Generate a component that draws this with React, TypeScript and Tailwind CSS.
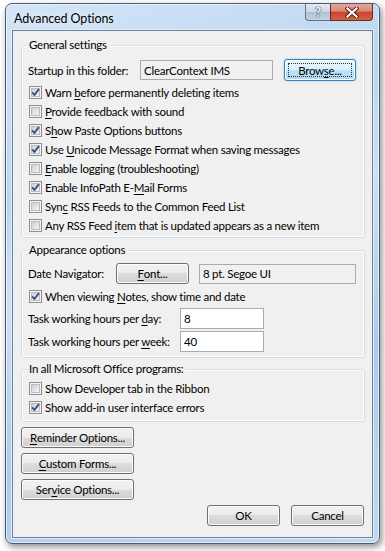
import type { ReactNode } from 'react';

const btn =
  'flex h-[21px] items-center justify-center rounded-[3px] border border-[#707070] bg-[linear-gradient(to_bottom,#f2f2f2_0%,#ebebeb_50%,#dddddd_50%,#cfcfcf_100%)] shadow-[inset_0_0_0_1px_#fcfcfc] text-black';

const field = 'flex h-[20px] items-center border border-[#a5acb5] px-[3px]';

function Key({ children }: { children: ReactNode }) {
  return <span className="underline underline-offset-[2px] decoration-[1px]">{children}</span>;
}

function CheckBox({ checked }: { checked?: boolean }) {
  return (
    <svg width="13" height="13" viewBox="0 0 13 13" className="shrink-0">
      <defs>
        <linearGradient id="cbFill" x1="0" y1="0" x2="1" y2="1">
          <stop offset="0" stopColor="#c9ccd1" />
          <stop offset="1" stopColor="#f7f7f7" />
        </linearGradient>
      </defs>
      <rect x="0.5" y="0.5" width="12" height="12" fill="#f4f4f4" stroke="#8e8f8f" />
      <rect x="2.5" y="2.5" width="8" height="8" fill="url(#cbFill)" stroke="#b9bcc1" />
      {checked && (
        <path d="M3.2 6.4 L5.4 9 L9.9 3.2" fill="none" stroke="#3b4f80" strokeWidth="1.9" strokeLinejoin="round" />
      )}
    </svg>
  );
}

function CheckRow({ checked, children }: { checked?: boolean; children: ReactNode }) {
  return (
    <div className="flex h-[19px] items-center gap-[3px] pl-[7px]">
      <CheckBox checked={checked} />
      <span className="whitespace-nowrap">{children}</span>
    </div>
  );
}

function Group({ title, className = '', children }: { title: string; className?: string; children: ReactNode }) {
  return (
    <div className={`relative ml-[8px] w-[344px] rounded-[3px] border border-[#d5dfe5] shadow-[inset_0_0_0_1px_#ffffff] ${className}`}>
      <span className="absolute -top-[9px] left-[5px] bg-[#f0f0f0] px-[2px] leading-[16px]">{title}</span>
      {children}
    </div>
  );
}

export default function App() {
  return (
    <div className="h-[551px] w-[385px] bg-white pl-[5px] pt-[3px] font-['Lato',sans-serif] text-[11.5px] leading-[15px] tracking-[-0.25px] text-black">
      <div className="flex h-[541px] w-[375px] flex-col rounded-[7px] border border-[#4b5d72] bg-[linear-gradient(160deg,#d3e5f7_0%,#bcd6f1_30%,#cde1f5_45%,#adcbeb_70%,#c0d9f2_100%)] shadow-[2px_3px_7px_rgba(0,0,0,0.45),inset_0_0_0_1px_rgba(255,255,255,0.55)]">
        {/* Title bar */}
        <div className="flex h-[26px] shrink-0">
          <span className="pl-[8px] pt-[7px] text-[12.5px] tracking-[-0.1px] text-black [text-shadow:0_0_6px_#ffffff]">Advanced Options</span>
          <div className="ml-auto mr-[6px] flex h-[17px]">
            <div className="flex w-[25px] items-center justify-center rounded-bl-[4px] border border-r-0 border-t-0 border-[#5f7186] bg-[linear-gradient(to_bottom,#e4ecf5_0%,#c9d7e7_50%,#aebfd3_50%,#c3d4e6_100%)] text-[13px] font-bold leading-none text-white [text-shadow:0_0_1px_#27384c,0_0_1px_#27384c,0_0_1px_#27384c]">
              ?
            </div>
            <div className="flex w-[43px] items-center justify-center rounded-br-[4px] border border-t-0 border-[#6a2a20] bg-[linear-gradient(to_bottom,#e8a594_0%,#d88a78_45%,#c7452f_50%,#d35f42_100%)]">
              <svg width="14" height="11" viewBox="0 0 14 11">
                <path d="M2.5 1.5 L11.5 9.5 M11.5 1.5 L2.5 9.5" stroke="#4a1a12" strokeWidth="4" strokeLinecap="square" />
                <path d="M2.5 1.5 L11.5 9.5 M11.5 1.5 L2.5 9.5" stroke="#ffffff" strokeWidth="2.2" strokeLinecap="square" />
              </svg>
            </div>
          </div>
        </div>

        {/* Client area */}
        <div className="mx-[6px] mb-[5px] flex flex-1 flex-col border border-[#6d8299] bg-[#f0f0f0] shadow-[0_0_0_1px_#e4eef9]">
          <Group title="General settings" className="mt-[14px] pb-[2px] pt-[13px]">
            <div className="flex h-[22px] items-center pl-[6px]">
              <span className="w-[112px] whitespace-nowrap">Startup in this folder:</span>
              <div className={`${field} w-[133px] bg-[#f0f0f0]`}>ClearContext IMS</div>
              <div className="relative ml-[11px] flex h-[22px] w-[72px] items-center justify-center rounded-[3px] border border-[#3c7fb1] bg-[linear-gradient(to_bottom,#eaf6fd_0%,#d9f0fc_50%,#bee6fd_50%,#a7d9f5_100%)] shadow-[0_0_2px_#7fc4ef,inset_0_0_0_1px_#ffffff]">
                <span className="absolute inset-[3px] border border-dotted border-[#333]" />
                <span>
                  Brow<Key>s</Key>e...
                </span>
              </div>
            </div>
            <div className="mt-[2px]">
              <CheckRow checked>
                Warn <Key>b</Key>efore permanently deleting items
              </CheckRow>
              <CheckRow>
                <Key>P</Key>rovide feedback with sound
              </CheckRow>
              <CheckRow checked>
                S<Key>h</Key>ow Paste Options buttons
              </CheckRow>
              <CheckRow checked>
                Use <Key>U</Key>nicode Message Format when saving messages
              </CheckRow>
              <CheckRow>
                <Key>E</Key>nable logging (troubleshooting)
              </CheckRow>
              <CheckRow checked>
                Enable InfoPath E-<Key>M</Key>ail Forms
              </CheckRow>
              <CheckRow>
                Syn<Key>c</Key> RSS Feeds to the Common Feed List
              </CheckRow>
              <CheckRow>
                Any RSS Feed <Key>i</Key>tem that is updated appears as a new item
              </CheckRow>
            </div>
          </Group>

          <Group title="Appearance options" className="mt-[12px] pb-[5px] pt-[12px]">
            <div className="flex h-[21px] items-center pl-[6px]">
              <span className="w-[88px] whitespace-nowrap">Date Navigator:</span>
              <div className={`${btn} w-[73px]`}>
                <Key>F</Key>ont...
              </div>
              <div className={`${field} ml-[10px] w-[157px] bg-[#f0f0f0]`}>8 pt. Segoe UI</div>
            </div>
            <div className="mt-[3px]">
              <CheckRow checked>
                When viewing <Key>N</Key>otes, show time and date
              </CheckRow>
            </div>
            <div className="mt-[2px] flex h-[21px] items-center pl-[6px]">
              <span className="w-[152px] whitespace-nowrap">
                Task working hours per <Key>d</Key>ay:
              </span>
              <div className={`${field} h-[21px] w-[84px] bg-white`}>8</div>
            </div>
            <div className="mt-[2px] flex h-[21px] items-center pl-[6px]">
              <span className="w-[152px] whitespace-nowrap">
                Task working hours per <Key>w</Key>eek:
              </span>
              <div className={`${field} h-[21px] w-[84px] bg-white`}>40</div>
            </div>
          </Group>

          <Group title="In all Microsoft Office programs:" className="mt-[11px] pb-[4px] pt-[9px]">
            <CheckRow>Show Developer tab in the Ribbon</CheckRow>
            <CheckRow checked>Show add-in user interface errors</CheckRow>
          </Group>

          <div className="ml-[8px] mt-[5px] flex flex-col gap-[5px]">
            <div className={`${btn} w-[113px]`}>
              <Key>R</Key>eminder Options...
            </div>
            <div className={`${btn} w-[113px]`}>
              <Key>C</Key>ustom Forms...
            </div>
            <div className={`${btn} w-[113px]`}>
              Ser<Key>v</Key>ice Options...
            </div>
          </div>

          <div className="mr-[8px] mt-[5px] flex justify-end gap-[11px]">
            <div className={`${btn} w-[73px]`}>OK</div>
            <div className={`${btn} w-[73px]`}>Cancel</div>
          </div>
        </div>
      </div>
    </div>
  );
}
